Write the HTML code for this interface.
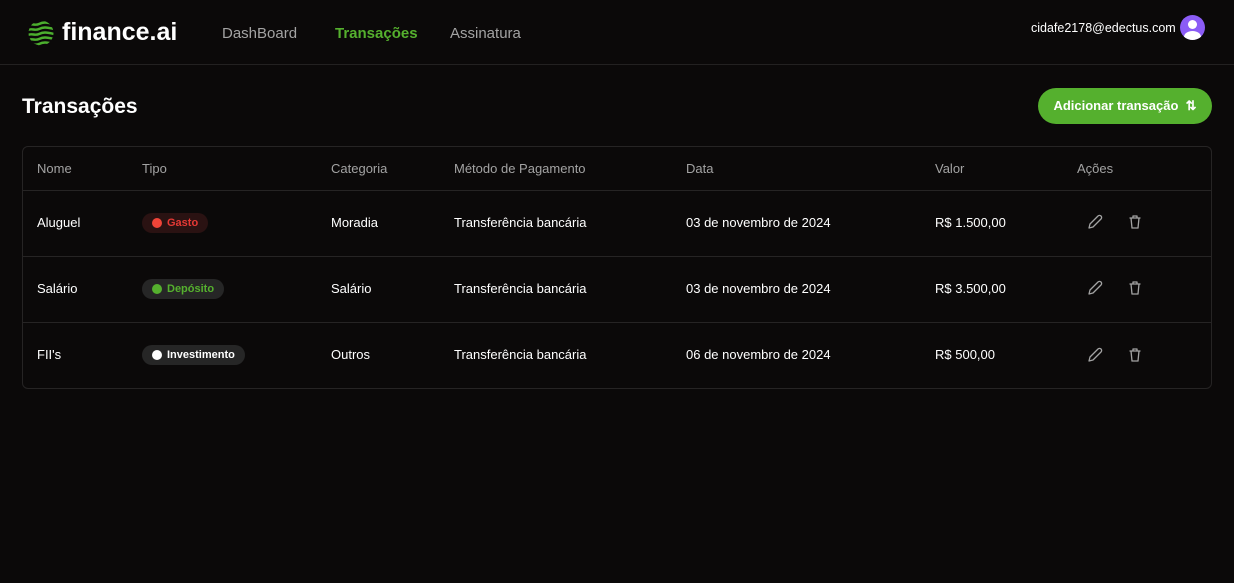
<!DOCTYPE html>
<html><head><meta charset="utf-8"><style>
*{margin:0;padding:0;box-sizing:border-box}
body{width:1234px;height:583px;background:#0b0909;font-family:"Liberation Sans",sans-serif;color:#fff;position:relative;overflow:hidden}
.hdr{position:absolute;left:0;top:0;width:1234px;height:65px;border-bottom:1px solid #232121}
.abs{position:absolute;white-space:nowrap}
.nav{font-size:15px;top:25px;color:#a3a3a3}
.tbl{position:absolute;left:22px;top:146px;width:1190px;height:243px;border:1px solid #262424;border-radius:6px}
.row{position:absolute;left:0;width:1188px;border-bottom:1px solid #262424}
.c{position:absolute;font-size:13px;white-space:nowrap}
.th{color:#a3a3a3}
.badge{position:absolute;left:119px;height:20px;border-radius:10px;font-size:11px;font-weight:bold;padding:0 10px 0 25px;line-height:20px}
.badge i{position:absolute;left:10px;top:5px;width:10px;height:10px;border-radius:50%}
</style></head><body>
<div class="hdr">
<svg class="abs" style="left:28px;top:20px" width="26" height="26" viewBox="0 0 26 26" fill="none" stroke="#4caf2e" stroke-width="2.4" stroke-linecap="round">
<clipPath id="cp"><circle cx="13" cy="13" r="12.5"/></clipPath>
<g clip-path="url(#cp)"><path d="M0 5c4-2 7 1 11-1s7-2 15 0"/><path d="M0 10c4-2 7 1 11-1s7-2 15 0"/><path d="M0 15c4-2 7 1 11-1s7-2 15 0"/><path d="M0 20c4-2 7 1 11-1s7-2 15 0"/><path d="M0 25c4-2 7 1 11-1s7-2 15 0"/></g></svg>
<div class="abs" style="left:62px;top:18px;font-size:25px;font-weight:bold">finance.ai</div>
<div class="abs nav" style="left:222px">DashBoard</div>
<div class="abs nav" style="left:335px;color:#55b02e;font-weight:bold">Transações</div>
<div class="abs nav" style="left:450px">Assinatura</div>
<div class="abs" style="left:1031px;top:21px;font-size:12.5px">cidafe2178@edectus.com</div>
<div class="abs" style="left:1180px;top:15px;width:25px;height:25px;border-radius:50%;background:#8b5cf6;overflow:hidden">
<div style="position:absolute;left:8px;top:5px;width:9px;height:9px;border-radius:50%;background:#fff"></div>
<div style="position:absolute;left:4px;top:16px;width:17px;height:12px;border-radius:50%;background:#fff"></div></div>
</div>
<div class="abs" style="left:22px;top:95px;font-size:21px;font-weight:bold">Transações</div>
<div class="abs" style="left:1038px;top:88px;width:174px;height:36px;border-radius:18px;background:#55b02e;font-size:13px;font-weight:bold;line-height:36px;text-align:center">Adicionar transação&nbsp;&nbsp;⇅</div>
<div class="tbl">
<div class="row" style="top:0;height:44px"></div>
<div class="row" style="top:44px;height:66px"></div>
<div class="row" style="top:110px;height:66px"></div>
<div class="c th" style="left:14px;top:14px">Nome</div>
<div class="c th" style="left:119px;top:14px">Tipo</div>
<div class="c th" style="left:308px;top:14px">Categoria</div>
<div class="c th" style="left:431px;top:14px">Método de Pagamento</div>
<div class="c th" style="left:663px;top:14px">Data</div>
<div class="c th" style="left:912px;top:14px">Valor</div>
<div class="c th" style="left:1054px;top:14px">Ações</div>

<div class="c" style="left:14px;top:68px">Aluguel</div>
<div class="badge" style="top:66px;background:#2a1212;color:#e53935"><i style="background:#f04438"></i>Gasto</div>
<div class="c" style="left:308px;top:68px">Moradia</div>
<div class="c" style="left:431px;top:68px">Transferência bancária</div>
<div class="c" style="left:663px;top:68px">03 de novembro de 2024</div>
<div class="c" style="left:912px;top:68px">R$ 1.500,00</div>

<div class="c" style="left:14px;top:134px">Salário</div>
<div class="badge" style="top:132px;background:#262626;color:#55b02e"><i style="background:#55b02e"></i>Depósito</div>
<div class="c" style="left:308px;top:134px">Salário</div>
<div class="c" style="left:431px;top:134px">Transferência bancária</div>
<div class="c" style="left:663px;top:134px">03 de novembro de 2024</div>
<div class="c" style="left:912px;top:134px">R$ 3.500,00</div>

<div class="c" style="left:14px;top:200px">FII's</div>
<div class="badge" style="top:198px;background:#262626;color:#fff"><i style="background:#fff"></i>Investimento</div>
<div class="c" style="left:308px;top:200px">Outros</div>
<div class="c" style="left:431px;top:200px">Transferência bancária</div>
<div class="c" style="left:663px;top:200px">06 de novembro de 2024</div>
<div class="c" style="left:912px;top:200px">R$ 500,00</div>
</div>
<svg class="abs" style="left:0;top:0" width="1234" height="583" fill="none" stroke="#a3a3a3" stroke-width="1.3" stroke-linecap="round" stroke-linejoin="round">
<defs><g id="ic"><path d="M1089 228l1-4 8-8a1.5 1.5 0 0 1 3 3l-8 8z"/><path d="M1130 218h10M1133 218v-2h4v2M1131 218l1 10h6l1-10"/></g></defs>
<use href="#ic"/><use href="#ic" y="66"/><use href="#ic" y="133"/>
</svg>
</body></html>
